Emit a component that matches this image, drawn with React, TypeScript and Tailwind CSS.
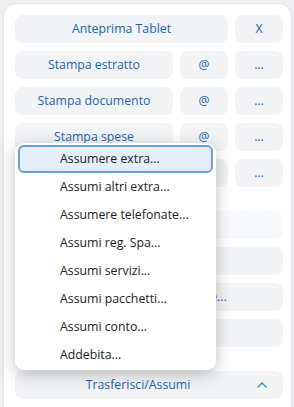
import React from "react";

const btn =
  "h-[28px] rounded-[8px] bg-[#f1f3f5] flex items-center justify-center text-[#1e63b3] text-[12.3px] leading-none";

function Row3({ label }: { label: string }) {
  return (
    <div className="flex gap-[7px]">
      <div className={`${btn} flex-1`}>{label}</div>
      <div className={`${btn} w-[48px]`}>@</div>
      <div className={`${btn} w-[48px]`}>...</div>
    </div>
  );
}

const items = [
  "Assumere extra...",
  "Assumi altri extra...",
  "Assumere telefonate...",
  "Assumi reg. Spa...",
  "Assumi servizi...",
  "Assumi pacchetti...",
  "Assumi conto...",
  "Addebita...",
];

export default function App() {
  return (
    <div
      className="h-[407px] overflow-hidden bg-[#eceef1] pl-[3px] pt-[3px] pr-[2px]"
      style={{ fontFamily: '"Open Sans", "Noto Sans", sans-serif' }}
    >
      <div className="relative h-[600px] rounded-[13px] border border-[#e2e4e8] bg-white pl-[11px] pr-[8px] pt-[11px]">
        <div className="flex flex-col gap-[8px]">
          <div className="flex gap-[7px]">
            <div className={`${btn} flex-1`}>Anteprima Tablet</div>
            <div className={`${btn} w-[48px]`}>X</div>
          </div>
          <Row3 label="Stampa estratto" />
          <Row3 label="Stampa documento" />
          <Row3 label="Stampa spese" />
          <Row3 label="Stampa conto" />
          <div className={`${btn} mt-[16px] bg-[#f8f9fa] text-[#9bb7d6]`}>Dividi conto</div>
          <div className={btn}>Modificare tariffa conto</div>
          <div className={btn}>Modificare l'intestatario e...</div>
          <div className={btn}>Chiudi conto</div>
          <div className={`${btn} mt-[16px] relative`}>
            <span className="pr-[22px]">Trasferisci/Assumi</span>
            <svg
              className="absolute right-[15px] top-[10px]"
              width="12"
              height="8"
              viewBox="0 0 12 8"
              fill="none"
            >
              <path d="M1.5 6.5 L6 2 L10.5 6.5" stroke="#3f86d2" strokeWidth="1.3" />
            </svg>
          </div>
          <div className={btn}>Storno</div>
        </div>

        <div className="absolute left-[11px] top-[139px] w-[201px] rounded-[9px] bg-white px-[3px] pt-[2px] pb-[1px] shadow-[0_4px_16px_rgba(0,0,0,0.25)]">
          {items.map((t, i) => (
            <div
              key={t}
              className={
                i === 0
                  ? "h-[28px] flex items-center rounded-[6px] border-2 border-[#6c9fd0] bg-[#e5effb] pl-[40px] text-[12.3px] text-[#222]"
                  : "h-[28px] flex items-center pl-[42px] text-[12.3px] text-[#222]"
              }
            >
              {t}
            </div>
          ))}
        </div>
      </div>
    </div>
  );
}
